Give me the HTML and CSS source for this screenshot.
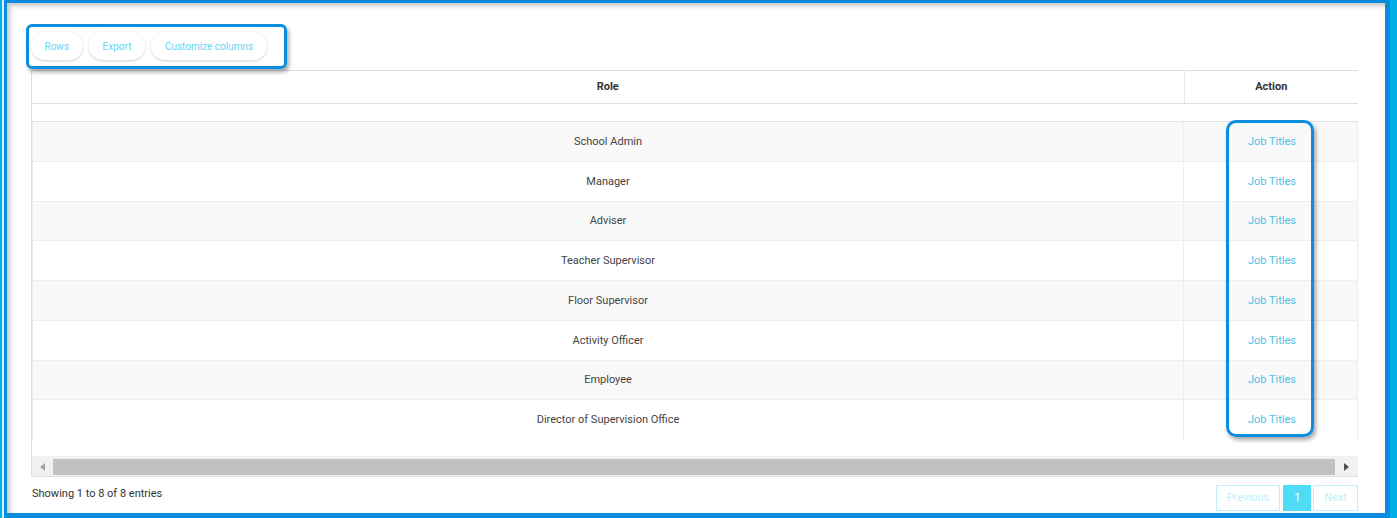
FILE: index.html
```html
<!DOCTYPE html>
<html lang="en">
<head>
    <meta charset="UTF-8">
    <meta name="viewport" content="width=device-width, initial-scale=1.0">
    <title>Roles</title>
    <link rel="stylesheet" href="styles.css">
</head>
<body>

    <div class="screen">
        <div class="frame">
            <div class="content">

                <div class="toolbar">
                    <button class="tool-btn">Rows</button>
                    <button class="tool-btn">Export</button>
                    <button class="tool-btn">Customize columns</button>
                </div>

                <div class="grid">
                    <div class="grid-head">
                        <table class="grid-table">
                            <thead>
                                <tr>
                                    <th class="col-role">Role</th>
                                    <th class="col-action">Action</th>
                                </tr>
                            </thead>
                        </table>
                    </div>

                    <div class="grid-body">
                        <div class="grid-spacer"></div>
                        <table class="grid-table rows">
                            <tbody>
                                <tr><td class="col-role">School Admin</td><td class="col-action"><a href="#">Job Titles</a></td></tr>
                                <tr><td class="col-role">Manager</td><td class="col-action"><a href="#">Job Titles</a></td></tr>
                                <tr><td class="col-role">Adviser</td><td class="col-action"><a href="#">Job Titles</a></td></tr>
                                <tr><td class="col-role">Teacher Supervisor</td><td class="col-action"><a href="#">Job Titles</a></td></tr>
                                <tr><td class="col-role">Floor Supervisor</td><td class="col-action"><a href="#">Job Titles</a></td></tr>
                                <tr><td class="col-role">Activity Officer</td><td class="col-action"><a href="#">Job Titles</a></td></tr>
                                <tr><td class="col-role">Employee</td><td class="col-action"><a href="#">Job Titles</a></td></tr>
                                <tr><td class="col-role">Director of Supervision Office</td><td class="col-action"><a href="#">Job Titles</a></td></tr>
                            </tbody>
                        </table>
                    </div>

                    <!-- horizontal scrollbar -->
                    <div class="hscroll">
                        <span class="hscroll-btn"><span class="arrow-left"></span></span>
                        <span class="hscroll-thumb"></span>
                        <span class="hscroll-btn right"><span class="arrow-right"></span></span>
                    </div>
                </div>

                <div class="grid-footer">
                    <div class="info">Showing 1 to 8 of 8 entries</div>
                    <div class="pager">
                        <a href="#" class="page-btn disabled">Previous</a>
                        <a href="#" class="page-btn current">1</a>
                        <a href="#" class="page-btn disabled">Next</a>
                    </div>
                </div>

            </div>
        </div>

        <!-- highlight boxes drawn over the screenshot -->
        <div class="mark mark-toolbar"></div>
        <div class="mark mark-actions"></div>
    </div>

</body>
</html>
```

FILE: styles.css
```css
* {
    box-sizing: border-box;
    margin: 0;
    padding: 0;
}

body {
    font-family: Roboto, "Liberation Sans", Arial, sans-serif;
    font-size: 11px;
    color: #333;
    background-color: #fff;
}

.screen {
    position: relative;
    width: 1397px;
    height: 518px;
    background-color: #00aee8;
    padding: 0 7px 0 4px;
}

.frame {
    height: 100%;
    background-color: #fff;
    border-style: solid;
    border-color: #0a8cdc;
    border-width: 3px 5px 5px 3px;
    box-shadow: -2px 0 0 #d6f0fa, inset 3px 3px 4px rgba(0, 0, 0, 0.22);
}

.content {
    padding: 29px 27px 0 24px;
}

/* Toolbar */
.toolbar {
    display: flex;
    gap: 6px;
}

.tool-btn {
    height: 28px;
    padding: 0 13.5px;
    border: none;
    border-radius: 14px;
    background-color: #fff;
    color: #62d6f5;
    font-family: inherit;
    font-size: 10px;
    box-shadow: 0 1px 3px rgba(0, 0, 0, 0.18);
    cursor: pointer;
}

.tool-btn:nth-child(2) {
    padding: 0 14px;
}

/* Grid */
.grid {
    margin-top: 10px;
}

.grid-head {
    border-top: 1px solid #dedede;
    border-left: 1px solid #dedede;
    border-bottom: 1px solid #dedede;
}

.grid-table {
    width: 100%;
    border-collapse: collapse;
    table-layout: fixed;
}

.grid-table th {
    height: 32px;
    padding-bottom: 2px;
    font-weight: bold;
    text-align: center;
    color: #333;
}

.col-role {
    width: 1152px;
}

.grid-head .col-role {
    border-right: 1px solid #e6e6e6;
}

.grid-body {
    height: 352px;
    border-left: 1px solid #dedede;
}

.grid-spacer {
    height: 17px;
}

.rows {
    border-top: 1px solid #e2e2e2;
    border-left: 1px solid #ececec;
    border-right: 1px solid #ececec;
}

.rows td {
    height: 39.75px;
    text-align: center;
    color: #444;
    border-bottom: 1px solid #eee;
}

.rows .col-role {
    width: 1151px;
    border-right: 1px solid #eee;
}

.rows .col-action {
    padding-left: 3px;
}

.rows tr:nth-child(odd) {
    background-color: #f9f9f9;
}

.rows tr:last-child td {
    border-bottom: none;
}

.rows a {
    color: #4dbfe8;
    text-decoration: none;
}

/* Fake horizontal scrollbar */
.hscroll {
    display: flex;
    height: 21px;
    padding: 3px 0 1px;
    background-color: #f1f1f1;
    border-left: 1px solid #dedede;
    border-bottom: 1px solid #dedede;
}

.hscroll-btn {
    width: 21px;
    display: flex;
    align-items: center;
    justify-content: center;
}

.hscroll-btn.right {
    width: 23px;
}

.hscroll-thumb {
    flex: 1;
    background-color: #c1c1c1;
}

.arrow-left {
    width: 0;
    height: 0;
    border-top: 4px solid transparent;
    border-bottom: 4px solid transparent;
    border-right: 5px solid #a3a3a3;
}

.arrow-right {
    width: 0;
    height: 0;
    border-top: 4px solid transparent;
    border-bottom: 4px solid transparent;
    border-left: 5px solid #505050;
}

/* Footer */
.grid-footer {
    display: flex;
    justify-content: space-between;
    align-items: flex-start;
    padding-top: 8px;
}

.info {
    line-height: 17px;
    padding-left: 1px;
    color: #333;
}

.pager {
    display: flex;
    gap: 2px;
}

.page-btn {
    height: 26px;
    line-height: 24px;
    padding: 0 10px;
    border: 1px solid #c4f0fb;
    color: #bdeffb;
    text-decoration: none;
    font-size: 11px;
}

.page-btn:first-child {
    margin-right: 1px;
}

.page-btn.current {
    width: 28px;
    padding: 0;
    text-align: center;
    border-color: #4fdcf6;
    background-color: #4fdcf6;
    color: #fff;
}

/* Highlight marks */
.mark {
    position: absolute;
    border: 3px solid #0a8ee0;
    box-shadow: 2px 3px 4px rgba(0, 0, 0, 0.35);
}

.mark-toolbar {
    left: 26px;
    top: 24px;
    width: 261px;
    height: 45px;
    border-radius: 6px;
}

.mark-actions {
    left: 1226px;
    top: 120px;
    width: 88px;
    height: 317px;
    border-radius: 10px;
}
```
